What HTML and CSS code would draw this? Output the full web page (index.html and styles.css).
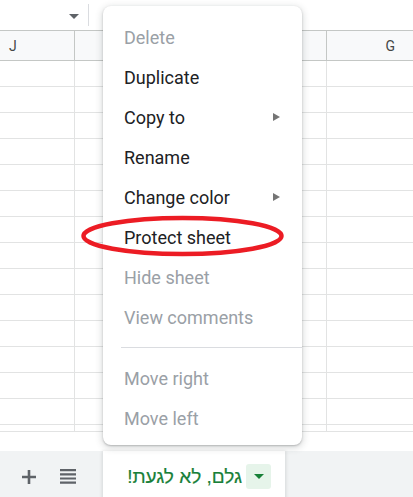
FILE: index.html
```html
<!DOCTYPE html>
<html lang="en">
<head>
<meta charset="utf-8">
<title>Sheet menu</title>
<link rel="stylesheet" href="styles.css">
</head>
<body>
<div class="page">
  <div class="toolbar">
    <div class="namebox"><span class="caret"></span></div>
    <div class="sep"></div>
  </div>
  <div class="colheads">
    <div class="head c1">J</div>
    <div class="head c2"></div>
    <div class="head c3">G</div>
  </div>
  <div class="grid">
    <div class="cell"></div><div class="cell"></div><div class="cell"></div>
    <div class="cell"></div><div class="cell"></div><div class="cell"></div>
    <div class="cell"></div><div class="cell"></div><div class="cell"></div>
    <div class="cell"></div><div class="cell"></div><div class="cell"></div>
    <div class="cell"></div><div class="cell"></div><div class="cell"></div>
    <div class="cell"></div><div class="cell"></div><div class="cell"></div>
    <div class="cell"></div><div class="cell"></div><div class="cell"></div>
    <div class="cell"></div><div class="cell"></div><div class="cell"></div>
    <div class="cell"></div><div class="cell"></div><div class="cell"></div>
    <div class="cell"></div><div class="cell"></div><div class="cell"></div>
    <div class="cell"></div><div class="cell"></div><div class="cell"></div>
    <div class="cell"></div><div class="cell"></div><div class="cell"></div>
    <div class="cell"></div><div class="cell"></div><div class="cell"></div>
    <div class="cell"></div><div class="cell"></div><div class="cell"></div>
    <div class="cell short"></div><div class="cell short"></div><div class="cell short"></div>
  </div>
  <div class="spacer"></div>
  <div class="tabbar">
    <button class="iconbtn add" aria-label="Add sheet">
      <svg width="14" height="14" viewBox="0 0 14 14"><path d="M5.7 0h2.6v14H5.7zM0 5.7h14v2.6H0z" fill="#5f6368"/></svg>
    </button>
    <button class="iconbtn list" aria-label="All sheets">
      <svg width="16" height="15" viewBox="0 0 16 15"><path d="M0 0h16v2.2H0zM0 4.2h16v2.2H0zM0 8.4h16v2.2H0zM0 12.6h16v2.2H0z" fill="#5f6368"/></svg>
    </button>
    <div class="tab">
      <span class="tabname" dir="rtl">גלם, לא לגעת!</span>
      <span class="tabdrop"><svg width="10" height="5" viewBox="0 0 10 5"><path d="M0 0h10L5 5z" fill="#188038"/></svg></span>
    </div>
  </div>

  <div class="menu">
    <div class="item disabled">Delete</div>
    <div class="item">Duplicate</div>
    <div class="item">Copy to<svg class="sub" width="7" height="8" viewBox="0 0 7 8"><path d="M0 0l7 4-7 4z" fill="#757575"/></svg></div>
    <div class="item">Rename</div>
    <div class="item">Change color<svg class="sub" width="7" height="8" viewBox="0 0 7 8"><path d="M0 0l7 4-7 4z" fill="#757575"/></svg></div>
    <div class="item">Protect sheet</div>
    <div class="item disabled">Hide sheet</div>
    <div class="item disabled">View comments</div>
    <div class="divider"></div>
    <div class="item disabled">Move right</div>
    <div class="item disabled">Move left</div>
  </div>

  <svg class="mark" width="413" height="497" viewBox="0 0 413 497">
    <ellipse cx="182.5" cy="236" rx="99" ry="18" fill="none" stroke="#ec1c24" stroke-width="4.5"/>
  </svg>
</div>
</body>
</html>
```

FILE: styles.css
```css
* { box-sizing: border-box; }
html, body { margin: 0; padding: 0; background: #fff; }
body { font-family: Roboto, "Liberation Sans", Arial, sans-serif; }

.page {
  position: relative;
  width: 413px;
  height: 497px;
  overflow: hidden;
  display: flex;
  flex-direction: column;
}

.toolbar {
  height: 30px;
  flex: none;
  display: flex;
  align-items: center;
  background: #fff;
}
.namebox {
  width: 82px;
  height: 30px;
  display: flex;
  align-items: center;
  justify-content: flex-end;
  padding-right: 3px;
}
.caret {
  width: 0;
  height: 0;
  border-left: 5px solid transparent;
  border-right: 5px solid transparent;
  border-top: 5px solid #5f6368;
  margin-top: 2px;
}
.sep {
  width: 1px;
  height: 22px;
  margin-left: 6px;
  background: #dadce0;
}

.colheads {
  height: 31px;
  flex: none;
  display: grid;
  grid-template-columns: 75px 252px 1fr;
  border-top: 1px solid #c4c7c5;
  border-bottom: 1px solid #c4c7c5;
  background: #f8f9fa;
}
.head {
  border-right: 1px solid #c4c7c5;
  font-size: 14px;
  color: #444746;
  display: flex;
  align-items: center;
  justify-content: center;
}
.head.c1 { justify-content: flex-start; padding-left: 9px; }
.head.c3 { border-right: none; justify-content: flex-end; padding-right: 18px; }

.grid {
  flex: none;
  display: grid;
  grid-template-columns: 75px 252px 1fr;
  grid-auto-rows: 26px;
}
.cell {
  border-right: 1px solid #e2e3e3;
  border-bottom: 1px solid #e2e3e3;
}
.cell:nth-child(3n) { border-right: none; }
.cell.short { height: 7px; align-self: start; }

.spacer { flex: 1; background: #fff; }

.tabbar {
  height: 51px;
  flex: none;
  background: #f1f3f4;
  display: flex;
  align-items: stretch;
}
.iconbtn {
  border: none;
  background: transparent;
  padding: 0;
  display: flex;
  align-items: center;
  justify-content: center;
}
.iconbtn.add { width: 30px; margin-left: 14px; }
.iconbtn.list { width: 20px; margin-left: 14px; }
.tab {
  margin-left: 25px;
  width: 182px;
  background: #fff;
  box-shadow: 0 1px 3px 1px rgba(60,64,67,.15);
  display: flex;
  align-items: center;
  padding-left: 21px;
}
.tabname {
  font-family: "Liberation Sans", Arial, sans-serif;
  font-size: 19px;
  color: #188038;
  width: 122px;
  padding-right: 4px;
  white-space: nowrap;
  text-align: right;
  direction: rtl;
  unicode-bidi: isolate;
  -webkit-text-stroke: 0.2px #188038;
}
.tabdrop {
  width: 25px;
  height: 25px;
  border-radius: 3px;
  background: #e6f4ea;
  display: flex;
  align-items: center;
  justify-content: center;
}

.menu {
  position: absolute;
  left: 103px;
  top: 6px;
  width: 199px;
  background: #fff;
  border-radius: 8px;
  padding: 11px 0 7px;
  box-shadow: 0 2px 6px 2px rgba(60,64,67,.15), 0 1px 2px 0 rgba(60,64,67,.3);
}
.item {
  height: 40px;
  display: flex;
  align-items: center;
  padding-left: 21px;
  padding-right: 22px;
  font-size: 18px;
  color: #202124;
  white-space: nowrap;
}
.item.disabled { color: #9aa0a6; }
.item .sub { margin-left: auto; }
.divider {
  height: 1px;
  margin: 10px 0 10px 18px;
  background: #dadce0;
}

.mark {
  position: absolute;
  left: 0;
  top: 0;
  pointer-events: none;
}
```
